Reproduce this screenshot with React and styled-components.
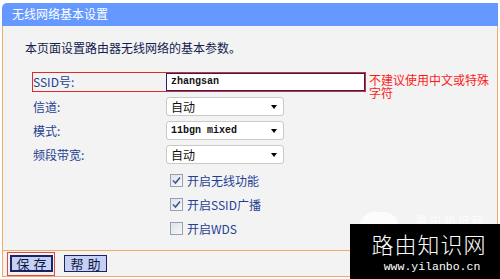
import React from "react";
import styled, { createGlobalStyle } from "styled-components";

const Global = createGlobalStyle`
  html, body { margin: 0; padding: 0; background: #ffffff; }
  body { font-family: "Noto Sans CJK SC", "Noto Sans", sans-serif; font-size: 12px; }
  #root { position: relative; width: 500px; height: 279px; overflow: hidden; }
`;

const ORANGE = "#f2ab66";
const LABEL = "#1f3f93";

const Panel = styled.div`
  margin: 3px 2px 0 2px;
  width: 496px;
`;

const Header = styled.div`
  height: 23px;
  line-height: 22px;
  background: #6699ff;
  border-top-left-radius: 5px;
  color: #ffffff;
  font-size: 12px;
  padding-left: 10px;
`;

const Body = styled.div`
  box-sizing: border-box;
  height: 225px;
  background: #f3f3f3;
  border-left: 1px solid ${ORANGE};
  border-right: 1px solid ${ORANGE};
  border-bottom: 1px solid ${ORANGE};
  padding: 14px 0 0 22px;
`;

const Intro = styled.div`
  height: 16px;
  line-height: 16px;
  color: #13214f;
  font-size: 12px;
`;

const Form = styled.div`
  margin: 16px 0 0 7px;
  display: flex;
  flex-direction: column;
`;

const Row = styled.div`
  display: flex;
  align-items: flex-start;
  margin-top: ${(p) => p.$gap || 0}px;
`;

const Field = styled.div`
  box-sizing: border-box;
  display: grid;
  grid-template-columns: 133px auto;
  align-items: center;
  border: 1px solid ${(p) => (p.$alert ? "#e02a2a" : "transparent")};
  height: ${(p) => p.$h}px;
`;

const Label = styled.div`
  color: ${LABEL};
  font-size: 12px;
  line-height: 16px;
`;

const TextInput = styled.div`
  box-sizing: border-box;
  width: 199px;
  height: 18px;
  background: #ffffff;
  border: 1px solid #23236e;
  font-family: "Liberation Mono", monospace;
  font-size: 10px;
  font-weight: bold;
  color: #111;
  line-height: 16px;
  padding-left: 4px;
`;

const Hint = styled.div`
  width: 124px;
  height: 20px;
  margin: 1px 0 0 3px;
  color: #ff1a1a;
  font-size: 12px;
  line-height: 13px;
  overflow: visible;
  position: relative;
  z-index: 1;
`;

const Select = styled.div`
  box-sizing: border-box;
  width: 118px;
  height: 19px;
  background: #ffffff;
  border: 1px solid #c9c9c9;
  border-radius: 3px;
  display: flex;
  align-items: center;
  justify-content: space-between;
  padding: 0 4px 0 4px;
  color: #111;
  font-family: ${(p) => (p.$mono ? `"Liberation Mono", monospace` : `"Noto Sans CJK SC", sans-serif`)};
  font-weight: ${(p) => (p.$mono ? "bold" : "normal")};
  font-size: ${(p) => (p.$mono ? 10 : 12)}px;
`;

const Arrow = styled.span`
  width: 0;
  height: 0;
  border-left: 3.5px solid transparent;
  border-right: 3.5px solid transparent;
  border-top: 4px solid #000;
  margin-right: 2px;
`;

const CheckRow = styled.label`
  display: flex;
  align-items: center;
  height: 20px;
  margin-top: ${(p) => p.$gap}px;
  margin-left: 138px;
  gap: 4px;
  color: ${LABEL};
  font-size: 12px;
`;

const Box = styled.span`
  box-sizing: border-box;
  width: 13px;
  height: 13px;
  border: 1px solid #97a1b4;
  background: linear-gradient(135deg, #dfe3ea, #f6f7f9);
  display: flex;
  align-items: center;
  justify-content: center;
`;

const ButtonBar = styled.div`
  box-sizing: border-box;
  height: 26px;
  background: #f3f3f3;
  border-left: 1px solid ${ORANGE};
  border-right: 1px solid ${ORANGE};
  border-bottom: 1px solid ${ORANGE};
  display: flex;
  align-items: center;
  padding-left: 4px;
  gap: 9px;
`;

const Focus = styled.div`
  border: 1px solid ${(p) => (p.$on ? "#e04848" : "transparent")};
  padding: 2px 1px 3px 2px;
  margin-top: 1px;
`;

const Button = styled.div`
  box-sizing: border-box;
  width: 43px;
  height: 17px;
  background: #c5d0f3;
  border: ${(p) => (p.$on ? 2 : 1)}px solid #1b2463;
  color: #0f1846;
  font-size: 13px;
  line-height: ${(p) => (p.$on ? 13 : 15)}px;
  text-align: center;
  letter-spacing: 4px;
  text-indent: 4px;
`;

const Mark = styled.div`
  position: absolute;
  right: 0;
  bottom: 0;
  width: 150px;
  height: 55px;
  background: #000;
  color: #fff;
  display: flex;
  flex-direction: column;
  align-items: center;
  z-index: 3;
`;

const MarkTitle = styled.div`
  font-size: 22px;
  line-height: 24px;
  height: 24px;
  margin-top: 7px;
  letter-spacing: 1px;
  font-weight: 300;
  padding-left: 8px;
`;

const MarkUrl = styled.div`
  font-family: "Liberation Mono", monospace;
  font-size: 11.5px;
  line-height: 14px;
  margin-top: 5px;
  padding-left: 14px;
`;

const Ghost = styled.div`
  position: absolute;
  left: 360px;
  top: 210px;
  height: 14px;
  display: flex;
  align-items: flex-start;
  gap: 18px;
  z-index: 2;
`;

const GhostCircle = styled.div`
  width: 38px;
  height: 14px;
  margin-top: 2px;
  border-radius: 19px 19px 0 0;
  background: rgba(255, 255, 255, 0.75);
`;

const GhostText = styled.div`
  font-size: 11px;
  line-height: 14px;
  letter-spacing: 3px;
  color: rgba(255, 255, 255, 0.85);
  margin-top: 3px;
`;

const Check = () => (
  <svg width="9" height="9" viewBox="0 0 9 9">
    <path d="M1 4.5 L3.5 7 L8 1.5" fill="none" stroke="#42568d" strokeWidth="1.6" />
  </svg>
);

export default function App() {
  const selects = [
    { label: "信道:", value: "自动" },
    { label: "模式:", value: "11bgn mixed", mono: true },
    { label: "频段带宽:", value: "自动" },
  ];
  const checks = [
    { text: "开启无线功能", on: true },
    { text: "开启SSID广播", on: true },
    { text: "开启WDS", on: false },
  ];
  return (
    <>
      <Global />
      <Panel>
        <Header>无线网络基本设置</Header>
        <Body>
          <Intro>本页面设置路由器无线网络的基本参数。</Intro>
          <Form>
            <Row>
              <Field $alert $h={20}>
                <Label>SSID号:</Label>
                <TextInput>zhangsan</TextInput>
              </Field>
              <Hint>不建议使用中文或特殊字符</Hint>
            </Row>
            {selects.map((s) => (
              <Row key={s.label} $gap={3}>
                <Field $h={21}>
                  <Label>{s.label}</Label>
                  <Select $mono={s.mono}>
                    <span>{s.value}</span>
                    <Arrow />
                  </Select>
                </Field>
              </Row>
            ))}
            {checks.map((c, i) => (
              <CheckRow key={c.text} $gap={i === 0 ? 5 : 4}>
                <Box>{c.on && <Check />}</Box>
                <span>{c.text}</span>
              </CheckRow>
            ))}
          </Form>
        </Body>
        <ButtonBar>
          <Focus $on>
            <Button $on>保存</Button>
          </Focus>
          <Button>帮助</Button>
        </ButtonBar>
      </Panel>
      <Ghost>
        <GhostCircle />
        <GhostText>路由知识网</GhostText>
      </Ghost>
      <Mark>
        <MarkTitle>路由知识网</MarkTitle>
        <MarkUrl>www.yilanbo.cn</MarkUrl>
      </Mark>
    </>
  );
}
